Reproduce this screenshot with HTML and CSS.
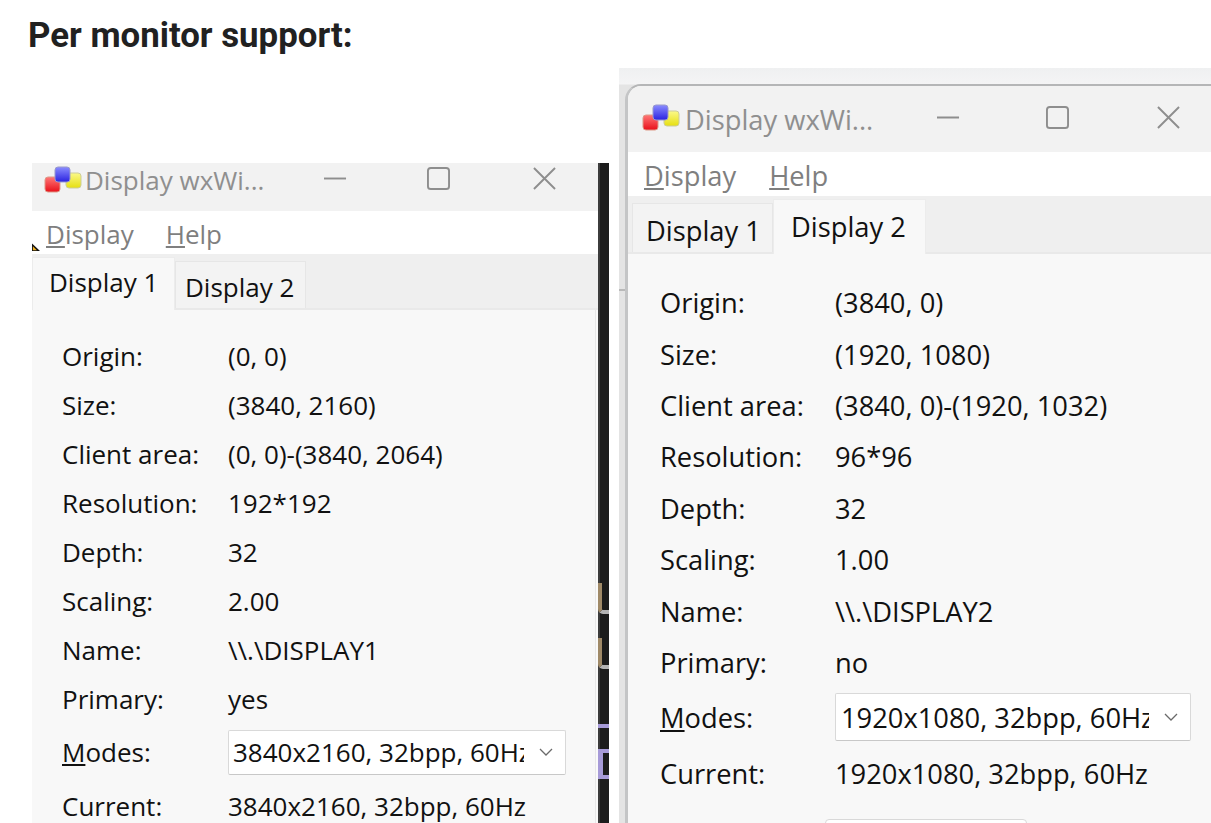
FILE: index.html
```html
<!DOCTYPE html>
<html lang="en">
<head>
    <meta charset="UTF-8">
    <title>Per monitor support</title>
    <link rel="stylesheet" href="styles.css">
</head>
<body>
    <h1 class="heading">Per monitor support:</h1>

    <!-- icon used by both title bars -->
    <svg width="0" height="0" class="defs">
        <defs>
            <linearGradient id="red" x1="0" y1="0" x2="0" y2="1"><stop offset="0" stop-color="#f77"/><stop offset="1" stop-color="#e8101a"/></linearGradient>
            <linearGradient id="blue" x1="0" y1="0" x2="0" y2="1"><stop offset="0" stop-color="#8a8cff"/><stop offset="1" stop-color="#2a22e0"/></linearGradient>
            <linearGradient id="yellow" x1="0" y1="0" x2="0" y2="1"><stop offset="0" stop-color="#fbf98a"/><stop offset="1" stop-color="#e6df10"/></linearGradient>
            <symbol id="app-icon" viewBox="0 0 38 27">
                <rect x="1" y="11" width="15" height="15" rx="3" fill="url(#red)" stroke="#d98" stroke-width="1"/>
                <rect x="22" y="7" width="15" height="15" rx="3" fill="url(#yellow)" stroke="#cc9" stroke-width="1"/>
                <rect x="11" y="1" width="15" height="15" rx="3" fill="url(#blue)" stroke="#99c" stroke-width="1"/>
            </symbol>
        </defs>
    </svg>

    <!-- left window -->
    <div class="window window-left">
        <div class="titlebar">
            <svg class="app-icon"><use href="#app-icon"/></svg>
            <span class="title">Display wxWi...</span>
            <svg class="ctrl ctrl-min" viewBox="0 0 24 24"><path d="M0 12H23"/></svg>
            <svg class="ctrl ctrl-max" viewBox="0 0 24 24"><rect x="1" y="1" width="22" height="22" rx="3"/></svg>
            <svg class="ctrl ctrl-close" viewBox="0 0 24 24"><path d="M1 1L23 23M23 1L1 23"/></svg>
        </div>
        <div class="menubar">
            <span class="menu"><u>D</u>isplay</span>
            <span class="menu"><u>H</u>elp</span>
        </div>
        <div class="tabstrip">
            <div class="tab tab-active">Display 1</div>
            <div class="tab">Display 2</div>
        </div>
        <div class="props">
            <span>Origin:</span><span>(0, 0)</span>
            <span>Size:</span><span>(3840, 2160)</span>
            <span>Client area:</span><span>(0, 0)-(3840, 2064)</span>
            <span>Resolution:</span><span>192*192</span>
            <span>Depth:</span><span>32</span>
            <span>Scaling:</span><span>2.00</span>
            <span>Name:</span><span>\\.\DISPLAY1</span>
            <span>Primary:</span><span>yes</span>
            <span><u>M</u>odes:</span>
            <div class="combo"><span class="combo-text">3840x2160, 32bpp, 60Hz</span><svg class="chevron" viewBox="0 0 14 8"><path d="M1 1L7 7L13 1"/></svg></div>
            <span>Current:</span><span>3840x2160, 32bpp, 60Hz</span>
        </div>
    </div>

    <svg class="cursor" viewBox="0 0 9 9"><path d="M0 0L9 8.500H0Z" fill="#111"/><path d="M1 3L5.500 7.500H1Z" fill="#f0b020"/></svg>

    <!-- dark editor strip between the windows -->
    <div class="strip">
        <i class="strip-u strip-u1"></i>
        <i class="strip-u strip-u2"></i>
        <i class="strip-line"></i>
        <i class="strip-box"></i>
    </div>

    <!-- right window -->
    <div class="halo"></div>
    <i class="tick"></i>
    <div class="window window-right">
        <div class="titlebar">
            <svg class="app-icon"><use href="#app-icon"/></svg>
            <span class="title">Display wxWi...</span>
            <svg class="ctrl ctrl-min" viewBox="0 0 24 24"><path d="M0 12H23"/></svg>
            <svg class="ctrl ctrl-max" viewBox="0 0 24 24"><rect x="1" y="1" width="22" height="22" rx="3"/></svg>
            <svg class="ctrl ctrl-close" viewBox="0 0 24 24"><path d="M1 1L23 23M23 1L1 23"/></svg>
        </div>
        <div class="menubar">
            <span class="menu"><u>D</u>isplay</span>
            <span class="menu"><u>H</u>elp</span>
        </div>
        <div class="tabstrip">
            <div class="tab">Display 1</div>
            <div class="tab tab-active">Display 2</div>
        </div>
        <div class="props">
            <span>Origin:</span><span>(3840, 0)</span>
            <span>Size:</span><span>(1920, 1080)</span>
            <span>Client area:</span><span>(3840, 0)-(1920, 1032)</span>
            <span>Resolution:</span><span>96*96</span>
            <span>Depth:</span><span>32</span>
            <span>Scaling:</span><span>1.00</span>
            <span>Name:</span><span>\\.\DISPLAY2</span>
            <span>Primary:</span><span>no</span>
            <span><u>M</u>odes:</span>
            <div class="combo"><span class="combo-text">1920x1080, 32bpp, 60Hz</span><svg class="chevron" viewBox="0 0 14 8"><path d="M1 1L7 7L13 1"/></svg></div>
            <span>Current:</span><span>1920x1080, 32bpp, 60Hz</span>
        </div>
        <div class="button-stub"></div>
    </div>
</body>
</html>
```

FILE: styles.css
```css
html, body {
    margin: 0;
    height: 823px;
    overflow: hidden;
    background: #fff;
}

body {
    position: relative;
    width: 1211px;
    font-family: "Open Sans", "Noto Sans", sans-serif;
    color: #111;
}

.defs {
    position: absolute;
}

.heading {
    margin: 0;
    padding: 16px 0 0 28px;
    font-family: Roboto, sans-serif;
    font-size: 34.800px;
    line-height: 39px;
    font-weight: 700;
    color: #212121;
}

/* windows sit on a free canvas */
.window {
    position: absolute;
    background: #fafafa;
    overflow: hidden;
}

.window-left {
    left: 32px;
    top: 163px;
    width: 566px;
    height: 660px;
    font-size: 26px;
}

.window-right {
    left: 625px;
    top: 84px;
    width: 586px;
    height: 739px;
    font-size: 27.300px;
    background: #f8f8f8;
    border-top: 2px solid #b5b6b7;
    border-left: 3px solid #c4c5c6;
    border-top-left-radius: 16px;
    box-sizing: border-box;
}

.halo {
    position: absolute;
    left: 619px;
    top: 68px;
    width: 592px;
    height: 755px;
    background: linear-gradient(#eff0f1, #f4f4f5 16px, #e4e4e4 17px);
}

.tick {
    position: absolute;
    left: 619px;
    top: 289px;
    width: 6px;
    height: 2px;
    background: #b9b9b9;
}

.titlebar {
    position: relative;
    display: flex;
    align-items: center;
    box-sizing: border-box;
    background: #f2f2f2;
    color: #8f8f8f;
}

.window-left .titlebar {
    height: 48px;
    padding: 0 0 15px 12px;
}

.window-right .titlebar {
    height: 66px;
    padding: 0 0 3px 14px;
}

.window-right .title {
    margin-top: 3px;
}

.app-icon {
    width: 38px;
    height: 27px;
    margin-right: 3px;
}

.window-right .app-icon {
    margin-right: 5px;
}

.ctrl {
    position: absolute;
    width: 23px;
    height: 23px;
    fill: none;
    stroke: #8e8e8e;
    stroke-width: 2;
}

.window-left .ctrl {
    top: 4px;
}

.window-right .ctrl {
    top: 20px;
}

.window-left .ctrl-min { left: 292px; }
.window-left .ctrl-max { left: 395px; }
.window-left .ctrl-close { left: 501px; }

.window-right .ctrl-min { left: 309px; }
.window-right .ctrl-max { left: 418px; }
.window-right .ctrl-close { left: 529px; }

.menubar {
    display: flex;
    align-items: center;
    box-sizing: border-box;
    background: #fff;
    color: #7f7f7f;
}

.window-left .menubar {
    height: 43px;
    gap: 32px;
    padding: 3px 0 0 14px;
}

.window-right .menubar {
    height: 44px;
    gap: 33px;
    padding: 2px 0 0 16px;
}

.tabstrip {
    display: flex;
    align-items: flex-end;
    box-sizing: border-box;
    background: #efefef;
    border-bottom: 2px solid #e9e9e9;
}

.window-left .tabstrip {
    height: 56px;
}

.window-right .tabstrip {
    height: 58px;
    padding-left: 4px;
}

.tab {
    box-sizing: border-box;
    background: #f3f3f3;
    border: 1px solid #e6e6e6;
    border-bottom: none;
    color: #111;
}

.window-left .tab {
    width: 131px;
    height: 47px;
    padding: 3px 0 0 9px;
    line-height: 44px;
}

.window-right .tab {
    width: 141px;
    height: 49px;
    padding: 3px 0 0 13px;
    line-height: 48px;
}

.window-left .tab-active,
.window-right .tab-active {
    margin-bottom: -2px;
    background: #f8f8f8;
    border-color: #ececec;
}

.window-left .tab-active {
    width: 143px;
    height: 53px;
    padding: 0 0 0 16px;
    line-height: 48px;
}

.window-right .tab-active {
    width: 153px;
    height: 55px;
    padding: 0 0 0 17px;
    line-height: 54px;
}

.props {
    display: grid;
    align-items: center;
    box-sizing: border-box;
}

.window-left .props {
    grid-template-columns: 166px 338px;
    grid-template-rows: repeat(8, 49px) 58px 50px;
    height: 514px;
    margin-right: 2px;
    padding: 21px 0 0 30px;
    background: #f8f8f8;
    border-right: 1px solid #e8e8e8;
}

.window-right .props {
    grid-template-columns: 175px 356px;
    grid-template-rows: repeat(8, 51.400px) 58.600px 53.400px;
    padding: 23px 0 0 32px;
}

.combo {
    display: flex;
    align-items: center;
    box-sizing: border-box;
    background: #fff;
    border: 1px solid #d9d9d9;
    border-bottom-color: #c8c8c8;
    border-radius: 2px;
    padding-left: 4px;
}

.window-left .combo {
    height: 45px;
}

.window-right .combo {
    height: 48px;
    padding-left: 5px;
}

.combo-text {
    flex: 1;
    overflow: hidden;
    white-space: nowrap;
    margin-right: 15px;
}

.chevron {
    width: 14px;
    height: 8px;
    margin-right: 12px;
    fill: none;
    stroke: #6a6a6a;
    stroke-width: 1.300;
}

.button-stub {
    position: absolute;
    left: 197px;
    top: 733px;
    width: 200px;
    height: 20px;
    background: #fff;
    border: 1px solid #d9d9d9;
    border-radius: 4px;
}

.cursor {
    position: absolute;
    left: 32px;
    top: 243px;
    width: 8px;
    height: 9px;
}

/* editor behind the left window */
.strip {
    position: absolute;
    left: 598px;
    top: 163px;
    width: 11px;
    height: 660px;
    background: #1c1c1c;
    box-shadow: inset 2px 0 0 #3c3c3c;
}

.strip-u {
    position: absolute;
    left: 0;
    width: 11px;
    height: 31px;
    box-sizing: border-box;
    border-left: 4px solid #a08a68;
    border-bottom: 4px solid #b4b4b4;
    border-bottom-left-radius: 5px;
}

.strip-u1 { top: 420px; }
.strip-u2 { top: 475px; }

.strip-line {
    position: absolute;
    left: 0;
    top: 561px;
    width: 11px;
    height: 4px;
    background: #a79bd8;
}

.strip-box {
    position: absolute;
    left: 0;
    top: 586px;
    width: 11px;
    height: 30px;
    box-sizing: border-box;
    border: solid #a79bd8;
    border-width: 4px 0 4px 5px;
}
```
